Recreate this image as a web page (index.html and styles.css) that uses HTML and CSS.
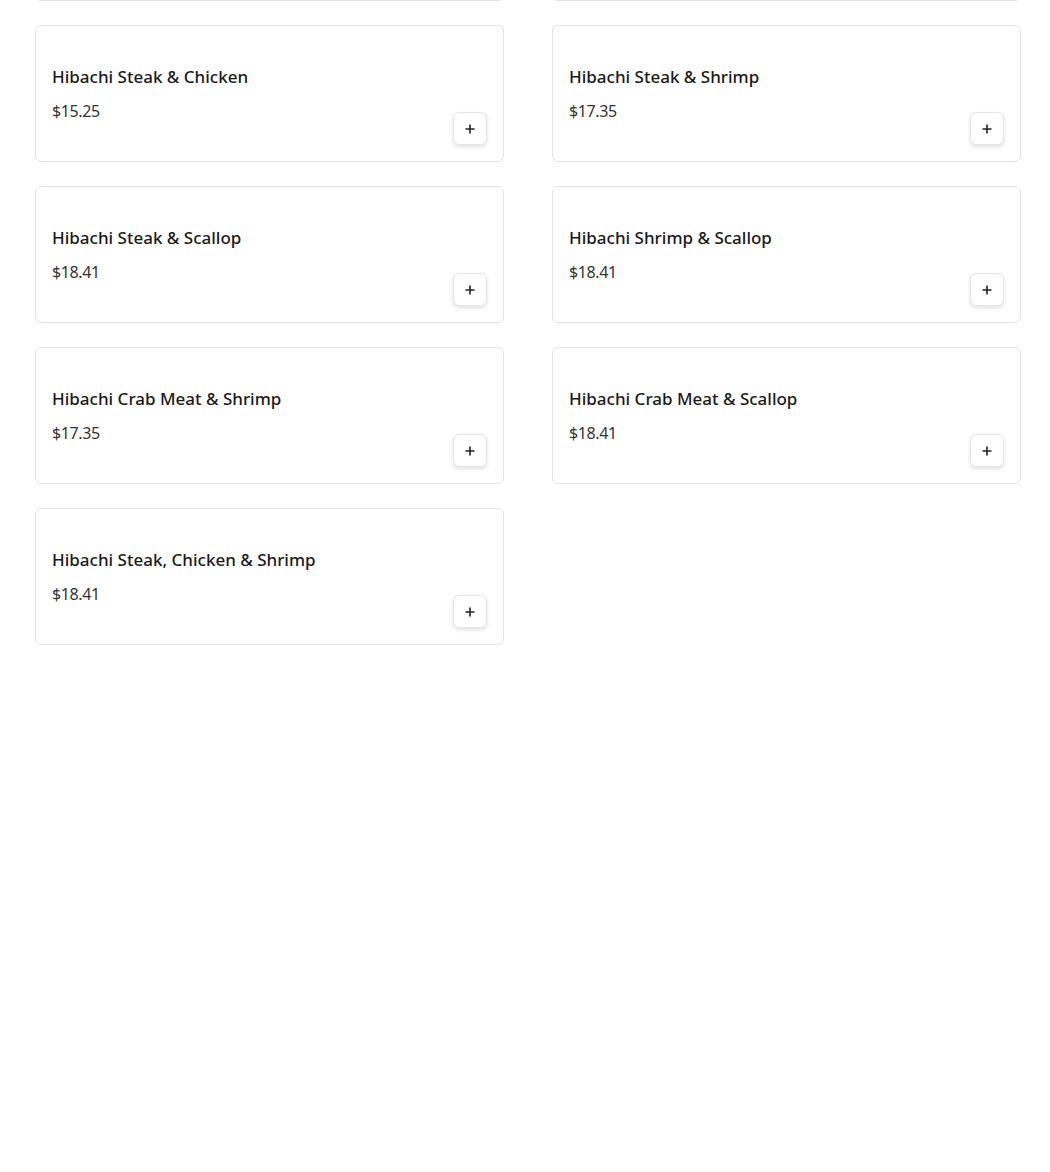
FILE: index.html
```html
<!DOCTYPE html>
<html>

<head>
    <meta charset="utf-8" />
    <title>Hibachi</title>
    <meta name="viewport" content="width=device-width, initial-scale=1">
    <link rel="stylesheet" href="styles.css">
</head>

<body>
    <div class="menu">
        <!-- previous row, scrolled off the top -->
        <div class="item"></div>
        <div class="item"></div>

        <div class="item">
            <div class="item-info">
                <div class="item-name">Hibachi Steak &amp; Chicken</div>
                <div class="item-price">$15.25</div>
            </div>
            <button class="add"><svg viewBox="0 0 12 12"><path d="M6 1.5v9M1.5 6h9" /></svg></button>
        </div>
        <div class="item">
            <div class="item-info">
                <div class="item-name">Hibachi Steak &amp; Shrimp</div>
                <div class="item-price">$17.35</div>
            </div>
            <button class="add"><svg viewBox="0 0 12 12"><path d="M6 1.5v9M1.5 6h9" /></svg></button>
        </div>
        <div class="item">
            <div class="item-info">
                <div class="item-name">Hibachi Steak &amp; Scallop</div>
                <div class="item-price">$18.41</div>
            </div>
            <button class="add"><svg viewBox="0 0 12 12"><path d="M6 1.5v9M1.5 6h9" /></svg></button>
        </div>
        <div class="item">
            <div class="item-info">
                <div class="item-name">Hibachi Shrimp &amp; Scallop</div>
                <div class="item-price">$18.41</div>
            </div>
            <button class="add"><svg viewBox="0 0 12 12"><path d="M6 1.5v9M1.5 6h9" /></svg></button>
        </div>
        <div class="item">
            <div class="item-info">
                <div class="item-name">Hibachi Crab Meat &amp; Shrimp</div>
                <div class="item-price">$17.35</div>
            </div>
            <button class="add"><svg viewBox="0 0 12 12"><path d="M6 1.5v9M1.5 6h9" /></svg></button>
        </div>
        <div class="item">
            <div class="item-info">
                <div class="item-name">Hibachi Crab Meat &amp; Scallop</div>
                <div class="item-price">$18.41</div>
            </div>
            <button class="add"><svg viewBox="0 0 12 12"><path d="M6 1.5v9M1.5 6h9" /></svg></button>
        </div>
        <div class="item">
            <div class="item-info">
                <div class="item-name">Hibachi Steak, Chicken &amp; Shrimp</div>
                <div class="item-price">$18.41</div>
            </div>
            <button class="add"><svg viewBox="0 0 12 12"><path d="M6 1.5v9M1.5 6h9" /></svg></button>
        </div>
    </div>
</body>

</html>
```

FILE: styles.css
```css
/* base */

body {
    margin: 0;
    background: #fff;
    font-family: "Noto Sans", "Open Sans", sans-serif;
    color: #1b1b1b;
}

/* layout */

.menu {
    display: grid;
    grid-template-columns: 469px 469px;
    column-gap: 48px;
    row-gap: 24px;
    padding: 0 29px 0 35px;
    margin-top: -136px;
}

/* menu items */

.item {
    display: flex;
    justify-content: space-between;
    align-items: flex-end;
    height: 137px;
    box-sizing: border-box;
    border: 1px solid #e3e3e3;
    border-radius: 6px;
    padding: 16px;
}

.item-info {
    align-self: flex-start;
    padding-top: 23px;
}

.item-name {
    font-size: 17px;
    line-height: 24px;
    font-weight: 500;
    color: #1a1a1a;
}

.item-price {
    margin-top: 11px;
    font-size: 16px;
    line-height: 22px;
    letter-spacing: -0.4px;
    color: #333;
}

.add {
    width: 34px;
    height: 33px;
    padding: 0;
    display: flex;
    align-items: center;
    justify-content: center;
    background: #fff;
    border: 1px solid #e6e6e6;
    border-radius: 6px;
    box-shadow: 0 2px 4px rgba(0, 0, 0, 0.12);
    cursor: pointer;
}

.add svg {
    width: 12px;
    height: 12px;
    fill: none;
    stroke: #222;
    stroke-width: 1.6;
}
```
